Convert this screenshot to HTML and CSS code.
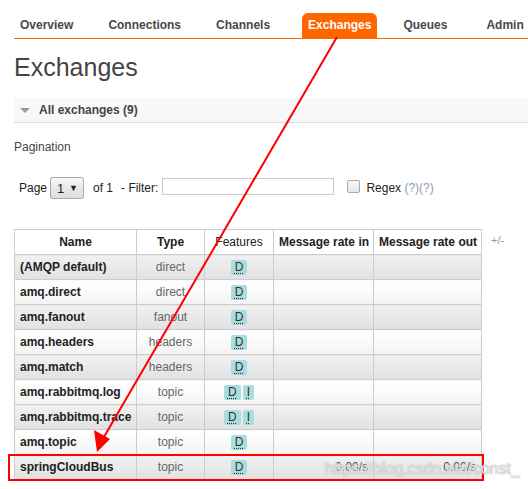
FILE: index.html
```html
<!DOCTYPE html>
<html>
<head>
<meta charset="utf-8">
<link rel="stylesheet" href="styles.css">
</head>
<body>
<div class="page">
  <nav class="menu">
    <a class="tab">Overview</a>
    <a class="tab">Connections</a>
    <a class="tab">Channels</a>
    <a class="tab active">Exchanges</a>
    <a class="tab">Queues</a>
    <a class="tab">Admin</a>
  </nav>
  <h1 class="title">Exchanges</h1>
  <div class="section-head"><span class="tri"></span><span>All exchanges (9)</span></div>
  <div class="pag-label">Pagination</div>
  <div class="pag-row">
    <span>Page</span>
    <span class="select">1 <span class="caret">▼</span></span>
    <span class="of">of 1</span>
    <span>- Filter:</span>
    <span class="filter"></span>
    <span class="check"></span>
    <span class="regex">Regex <span class="help">(?)(?)</span></span>
  </div>
  <div class="table-row">
    <table class="list">
      <thead>
        <tr>
          <th class="c-name">Name</th>
          <th class="c-type">Type</th>
          <th class="c-feat plain">Features</th>
          <th class="c-rin">Message rate in</th>
          <th class="c-rout">Message rate out</th>
        </tr>
      </thead>
      <tbody>
        <tr class="alt1"><td class="name">(AMQP default)</td><td class="type">direct</td><td class="feat"><abbr>D</abbr></td><td></td><td></td></tr>
        <tr class="alt2"><td class="name">amq.direct</td><td class="type">direct</td><td class="feat"><abbr>D</abbr></td><td></td><td></td></tr>
        <tr class="alt1"><td class="name">amq.fanout</td><td class="type">fanout</td><td class="feat"><abbr>D</abbr></td><td></td><td></td></tr>
        <tr class="alt2"><td class="name">amq.headers</td><td class="type">headers</td><td class="feat"><abbr>D</abbr></td><td></td><td></td></tr>
        <tr class="alt1"><td class="name">amq.match</td><td class="type">headers</td><td class="feat"><abbr>D</abbr></td><td></td><td></td></tr>
        <tr class="alt2"><td class="name">amq.rabbitmq.log</td><td class="type">topic</td><td class="feat"><abbr>D</abbr><abbr>I</abbr></td><td></td><td></td></tr>
        <tr class="alt1"><td class="name">amq.rabbitmq.trace</td><td class="type">topic</td><td class="feat"><abbr>D</abbr><abbr>I</abbr></td><td></td><td></td></tr>
        <tr class="alt2"><td class="name">amq.topic</td><td class="type">topic</td><td class="feat"><abbr>D</abbr></td><td></td><td></td></tr>
        <tr class="alt1"><td class="name">springCloudBus</td><td class="type">topic</td><td class="feat"><abbr>D</abbr></td><td class="rate">0.00/s</td><td class="rate">0.00/s</td></tr>
      </tbody>
    </table>
    <span class="plusminus">+/-</span>
  </div>
</div>

<svg class="arrow" width="528" height="489" viewBox="0 0 528 489">
  <line x1="337" y1="37" x2="101" y2="442" stroke="#f00" stroke-width="2"/>
  <polygon points="97,452 94,430 110,439" fill="#f00"/>
</svg>
<div class="redbox"></div>
<div class="watermark">https://blog.csdn.net/const_</div>
</body>
</html>
```

FILE: styles.css
```css
html, body {
  margin: 0;
  padding: 0;
  background: #fff;
}
body {
  width: 528px;
  height: 489px;
  overflow: hidden;
  position: relative;
  font-family: "Liberation Sans", Arial, sans-serif;
  font-size: 12px;
  color: #444;
}
.page {
  padding: 13px 0 0 14px;
}
.menu {
  display: flex;
  border-bottom: 1px solid #f60;
  height: 25px;
}
.tab {
  display: block;
  height: 25px;
  line-height: 25px;
  padding: 0 6px;
  margin-right: 23px;
  font-weight: bold;
  font-size: 12px;
  color: #484848;
  border-radius: 6px 6px 0 0;
  white-space: nowrap;
}
.tab:nth-child(3) {
  margin-right: 26px;
}
.tab.active {
  background: #f60;
  color: #fff;
  margin-right: 20px;
}
.tab:nth-child(5) {
  margin-right: 27px;
}
.title {
  margin: 13px 0 0 0;
  font-size: 25px;
  font-weight: normal;
  line-height: 30px;
  color: #444;
}
.section-head {
  margin-top: 16px;
  height: 24px;
  background: #f8f8f8;
  border-bottom: 1px solid #ddd;
  display: flex;
  align-items: center;
  font-weight: bold;
  color: #444;
}
.tri {
  width: 0;
  height: 0;
  border-left: 5px solid transparent;
  border-right: 5px solid transparent;
  border-top: 5px solid #999;
  margin: 1px 9px 0 6px;
}
.pag-label {
  margin-top: 17px;
  line-height: 15px;
  color: #444;
}
.pag-row {
  margin-top: 22px;
  margin-left: 5px;
  display: flex;
  align-items: center;
  height: 22px;
  color: #222;
  font-size: 12px;
}
.select {
  margin-left: 3px;
  box-sizing: border-box;
  width: 34px;
  height: 22px;
  border: 1px solid #aaa;
  border-radius: 2px;
  background: linear-gradient(#f6f6f6, #ddd);
  display: flex;
  align-items: center;
  justify-content: space-between;
  padding: 0 5px 0 6px;
  font-size: 13px;
  color: #222;
}
.caret {
  font-size: 9px;
}
.of {
  margin: 0 8px 0 9px;
}
.filter {
  display: block;
  width: 172px;
  height: 17px;
  box-sizing: border-box;
  border: 1px solid #ccc;
  margin-left: 4px;
  margin-top: -3px;
}
.check {
  display: block;
  width: 11px;
  height: 11px;
  border: 1px solid #aaa;
  border-radius: 2px;
  background: linear-gradient(#fafafa, #e4e4e4);
  margin-left: 13px;
  margin-top: -4px;
}
.regex {
  margin-left: 6px;
  font-size: 12px;
}
.help {
  color: #8a9bb4;
}
.table-row {
  margin-top: 30px;
  display: flex;
  align-items: flex-start;
}
.list {
  border-collapse: collapse;
  table-layout: fixed;
  width: 468px;
  font-size: 12px;
}
.list th, .list td {
  border: 1px solid #ccc;
  height: 25px;
  padding: 0 5px;
  box-sizing: border-box;
  white-space: nowrap;
  overflow: hidden;
}
.list th {
  background: #fff;
  color: #222;
  font-weight: bold;
  text-align: center;
}
.list th.plain {
  font-weight: normal;
}
.c-name { width: 122px; }
.c-type { width: 68px; }
.c-feat { width: 69px; }
.c-rin { width: 100px; }
.c-rout { width: 108px; }
.list tr.alt1 td {
  background: linear-gradient(#f1f1f1, #e1e1e1);
}
.list tr.alt2 td {
  background: linear-gradient(#fff, #f4f4f4);
}
.list td.name {
  font-weight: bold;
  color: #222;
}
.list td.type {
  text-align: center;
  color: #666;
}
.list td.feat {
  text-align: center;
}
.list td.rate {
  text-align: right;
  color: #555;
}
abbr {
  display: inline-block;
  background: #aadddd;
  color: #333;
  text-decoration: underline dotted #333;
  text-underline-offset: 2px;
  padding: 0 4px;
  line-height: 15px;
  height: 15px;
  border-radius: 2px;
  font-size: 12px;
  margin: 0 1px;
  vertical-align: middle;
}
.plusminus {
  margin: 5px 0 0 9px;
  color: #999;
  font-size: 11px;
}
.arrow {
  position: absolute;
  left: 0;
  top: 0;
  pointer-events: none;
}
.redbox {
  position: absolute;
  left: 8px;
  top: 454px;
  width: 472px;
  height: 23px;
  border: 2px solid #f00;
}
.watermark {
  position: absolute;
  left: 325px;
  top: 460px;
  font-size: 16px;
  color: rgba(255,255,255,0.6);
  text-shadow: 0 0 1px #aaa, 0 0 2px #ccc;
  white-space: nowrap;
}
```
